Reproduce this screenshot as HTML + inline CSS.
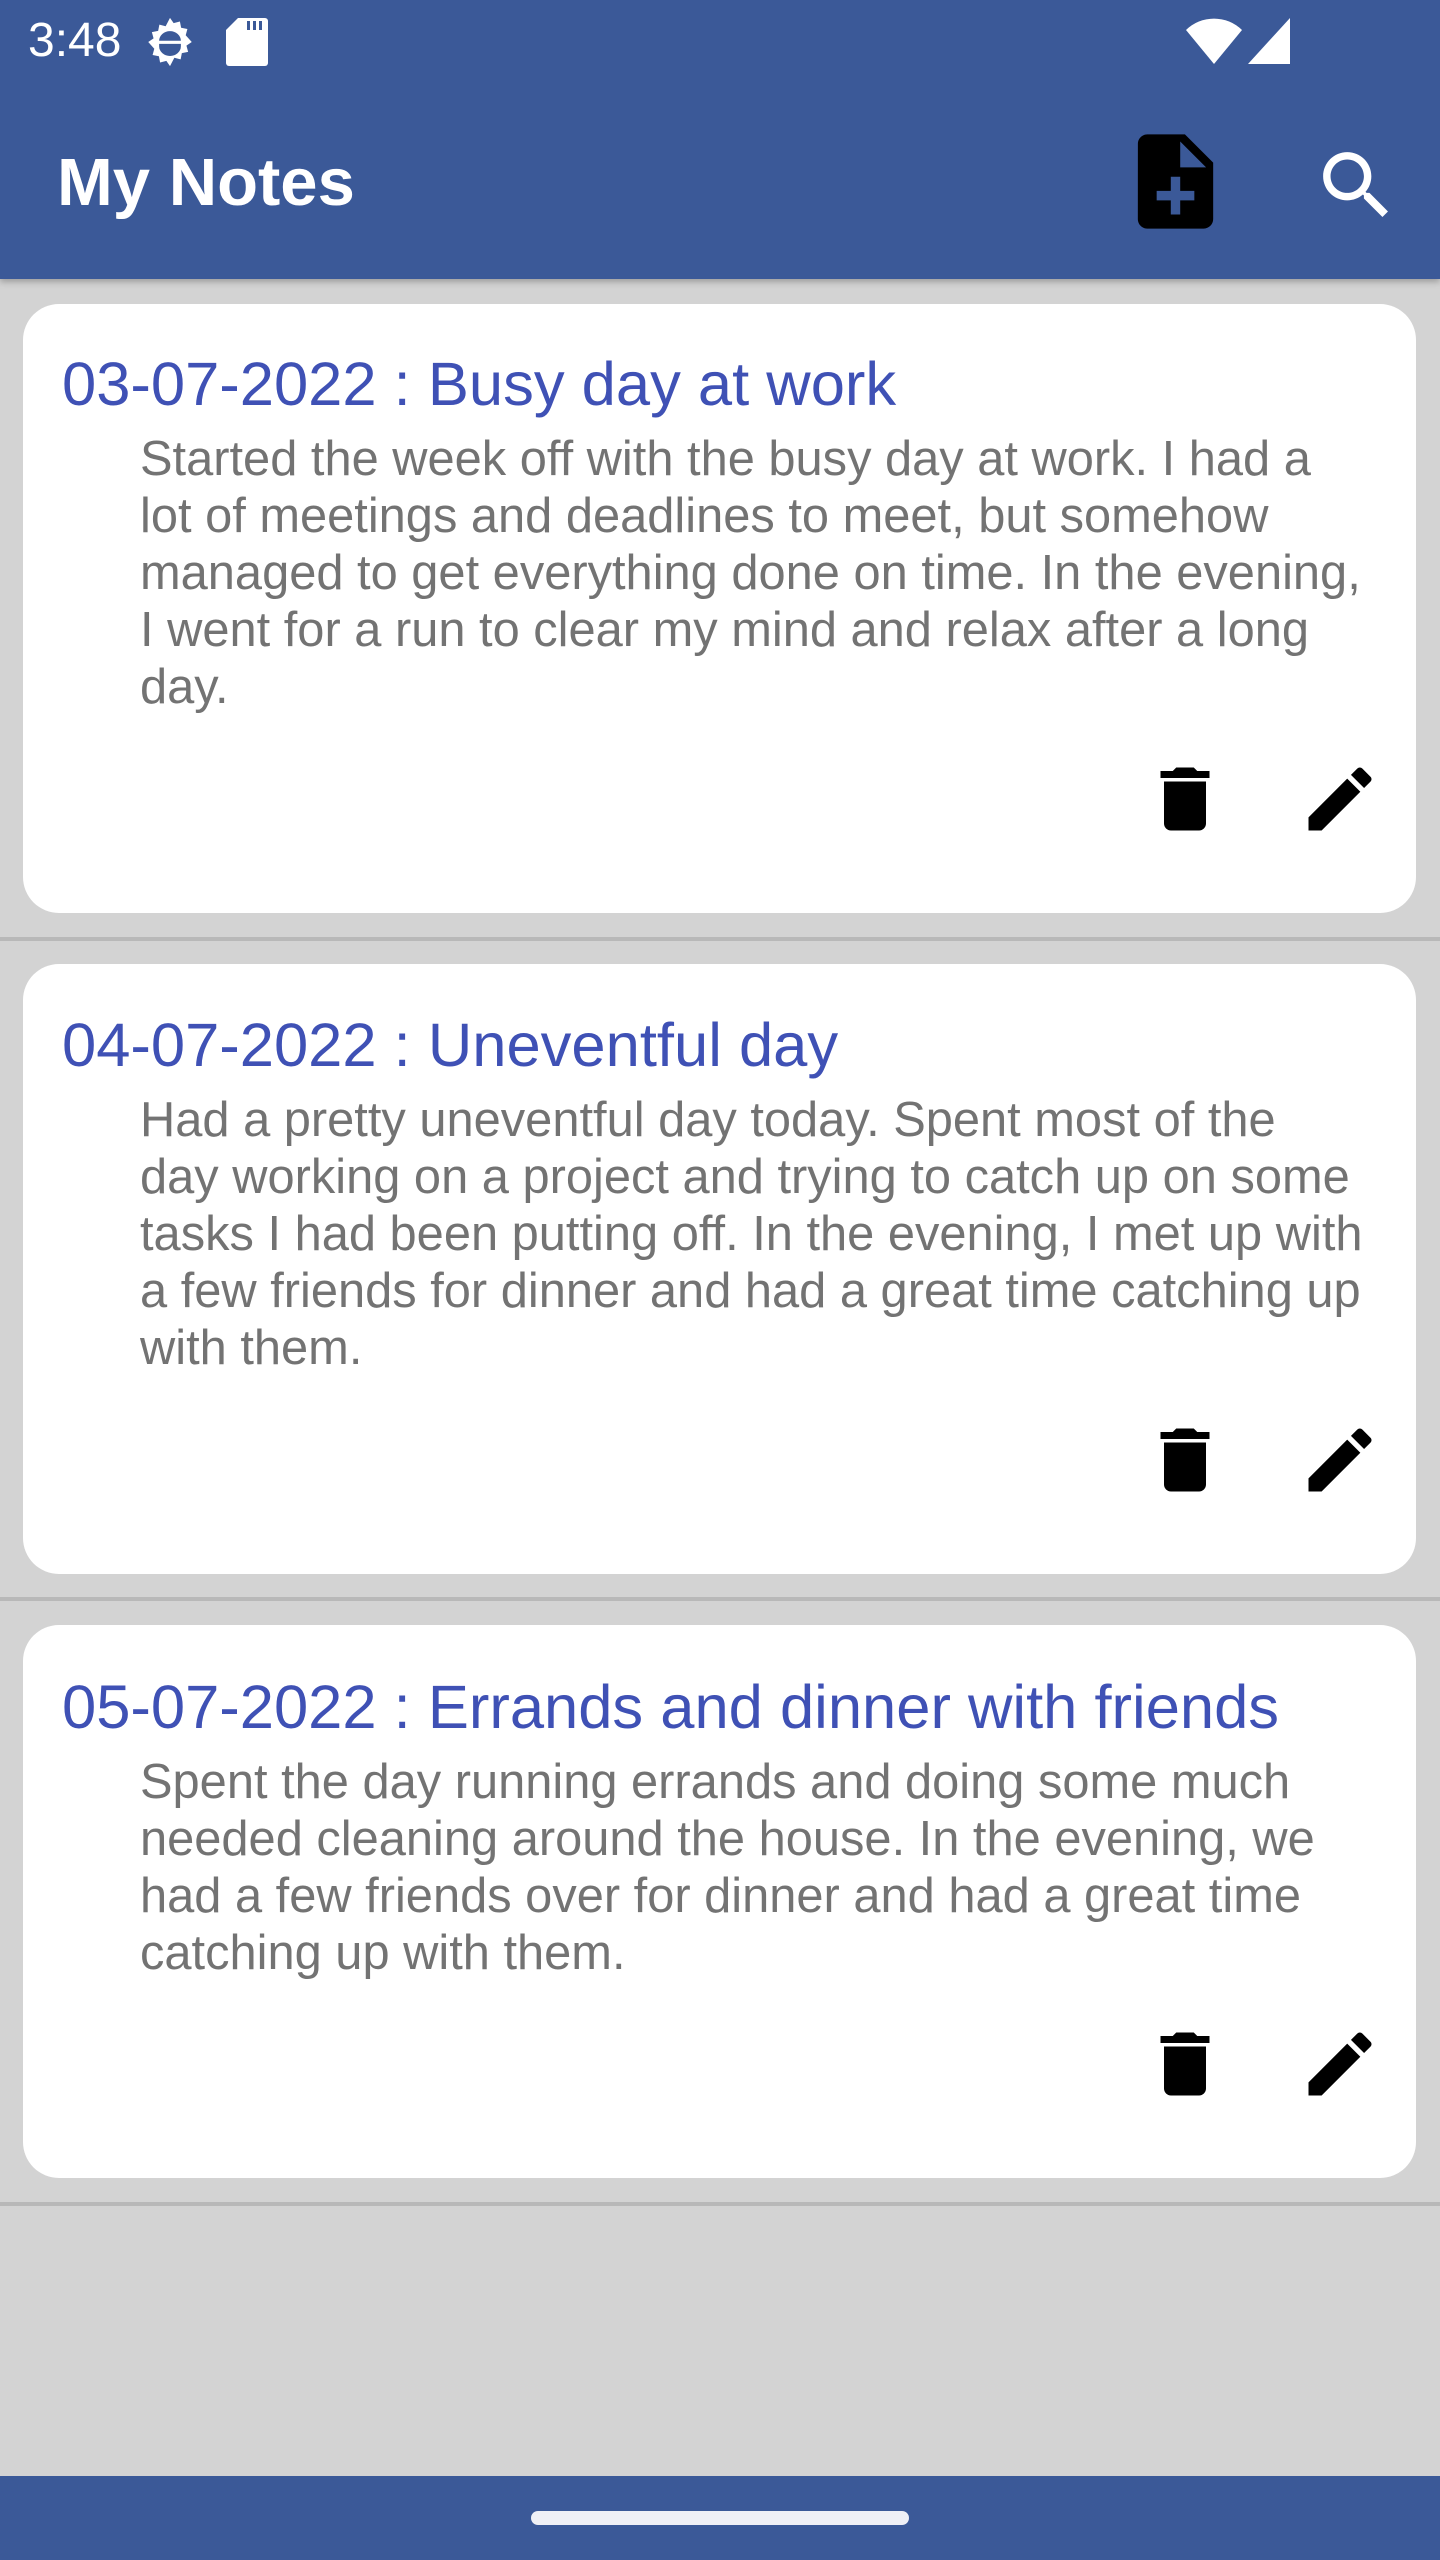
<!DOCTYPE html>
<html><head><meta charset="utf-8"><style>
*{margin:0;padding:0;box-sizing:border-box}
body{width:1440px;height:2560px;background:#d3d3d3;position:relative;overflow:hidden;font-family:"Liberation Sans",sans-serif}
.top{position:absolute;left:0;top:0;width:1440px;height:279px;background:#3b5998;box-shadow:0 3px 6px rgba(0,0,0,.25)}
.abs{position:absolute}
.card{position:absolute;left:23px;width:1393px;background:#fff;border-radius:36px}
.div{position:absolute;left:0;width:1440px;height:4px;background:#b8b8b8}
.title{position:absolute;left:62px;font-size:61.5px;color:#3f51b5;white-space:nowrap;line-height:70px}
.body{position:absolute;left:140px;font-size:48.8px;color:#737373;white-space:nowrap;line-height:57px}
svg.i{position:absolute;width:84px;height:84px}
</style></head><body>
<div class="top"></div>
<div class="abs" style="left:28px;top:15px;font-size:48px;color:#fff;line-height:52px">3:48</div>
<svg class="abs" style="left:141px;top:13px" width="58" height="58" viewBox="0 0 24 24"><path fill="#fff" d="M12 2l1.5 2.2 2.6-.7.5 2.6 2.6.5-.7 2.6L21 12l-2.2 1.5.7 2.6-2.6.5-.5 2.6-2.6-.7L12 22l-1.5-2.2-2.6.7-.5-2.6-2.6-.5.7-2.6L3 12l2.2-1.5-.7-2.6 2.6-.5.5-2.6 2.6.7z"/><path fill="#3b5998" d="M7.5 11.5a4.5 4 0 0 1 9 0zM7.5 12.8h9v1a4.5 4 0 0 1-9 0z"/></svg>
<svg class="abs" style="left:226px;top:18px" width="42" height="48" viewBox="0 0 14 16"><path fill="#fff" d="M4 0h9a1 1 0 0 1 1 1v14a1 1 0 0 1-1 1H1a1 1 0 0 1-1-1V4z"/><path fill="#3b5998" d="M7 1h1v3H7zM9 1h1v3H9zM11 1h1v3h-1z"/></svg>
<svg class="abs" style="left:1186px;top:18px" width="56" height="46" viewBox="0 0 28 23"><path fill="#fff" d="M14 23L0 6a20 20 0 0 1 28 0z"/></svg>
<svg class="abs" style="left:1248px;top:18px" width="42" height="46" viewBox="0 0 42 46"><path fill="#fff" d="M42 0v46H0z"/></svg>
<div class="abs" style="left:57px;top:147px;font-size:67px;font-weight:bold;color:#fff;line-height:72px">My Notes</div>
<svg class="abs" style="left:1119px;top:125px" width="113" height="113" viewBox="0 0 24 24"><path fill="#000" d="M14 2H6c-1.1 0-1.99.9-1.99 2L4 20c0 1.1.89 2 1.99 2H18c1.1 0 2-.9 2-2V8l-6-6z"/><path fill="#3b5998" d="M16 16h-3v3h-2v-3H8v-2h3v-3h2v3h3v2zM13 9V3.5L18.5 9H13z"/></svg>
<svg class="abs" style="left:1312px;top:141px" width="89" height="89" viewBox="0 0 24 24"><path fill="#fff" d="M15.5 14h-.79l-.28-.27C15.41 12.59 16 11.11 16 9.5 16 5.91 13.09 3 9.5 3S3 5.91 3 9.5 5.91 16 9.5 16c1.61 0 3.09-.59 4.23-1.57l.27.28v.79l5 4.99L20.49 19l-4.99-5zm-6 0C7.01 14 5 11.99 5 9.5S7.01 5 9.5 5 14 7.01 14 9.5 11.99 14 9.5 14z"/></svg>

<div class="card" style="top:304px;height:609px"></div>
<div class="div" style="top:937px"></div>
<div class="card" style="top:964px;height:610px"></div>
<div class="div" style="top:1597px"></div>
<div class="card" style="top:1625px;height:553px"></div>
<div class="div" style="top:2202px"></div>

<div class="title" style="top:350px">03-07-2022 : Busy day at work</div>
<div class="body" style="top:431px">Started the week off with the busy day at work. I had a<br>lot of meetings and deadlines to meet, but somehow<br>managed to get everything done on time. In the evening,<br>I went for a run to clear my mind and relax after a long<br>day.</div>

<div class="title" style="top:1011px">04-07-2022 : Uneventful day</div>
<div class="body" style="top:1092px">Had a pretty uneventful day today. Spent most of the<br>day working on a project and trying to catch up on some<br>tasks I had been putting off. In the evening, I met up with<br>a few friends for dinner and had a great time catching up<br>with them.</div>

<div class="title" style="top:1673px">05-07-2022 : Errands and dinner with friends</div>
<div class="body" style="top:1754px">Spent the day running errands and doing some much<br>needed cleaning around the house. In the evening, we<br>had a few friends over for dinner and had a great time<br>catching up with them.</div>

<svg class="i" style="left:1143px;top:757px" viewBox="0 0 24 24"><path d="M6 19c0 1.1.9 2 2 2h8c1.1 0 2-.9 2-2V7H6v12zM19 4h-3.5l-1-1h-5l-1 1H5v2h14V4z"/></svg>
<svg class="i" style="left:1298px;top:757px" viewBox="0 0 24 24"><path d="M3 17.25V21h3.75L17.81 9.94l-3.75-3.75L3 17.25zM20.71 7.04c.39-.39.39-1.02 0-1.41l-2.34-2.34c-.39-.39-1.02-.39-1.41 0l-1.83 1.83 3.75 3.75 1.83-1.83z"/></svg>
<svg class="i" style="left:1143px;top:1418px" viewBox="0 0 24 24"><path d="M6 19c0 1.1.9 2 2 2h8c1.1 0 2-.9 2-2V7H6v12zM19 4h-3.5l-1-1h-5l-1 1H5v2h14V4z"/></svg>
<svg class="i" style="left:1298px;top:1418px" viewBox="0 0 24 24"><path d="M3 17.25V21h3.75L17.81 9.94l-3.75-3.75L3 17.25zM20.71 7.04c.39-.39.39-1.02 0-1.41l-2.34-2.34c-.39-.39-1.02-.39-1.41 0l-1.83 1.83 3.75 3.75 1.83-1.83z"/></svg>
<svg class="i" style="left:1143px;top:2022px" viewBox="0 0 24 24"><path d="M6 19c0 1.1.9 2 2 2h8c1.1 0 2-.9 2-2V7H6v12zM19 4h-3.5l-1-1h-5l-1 1H5v2h14V4z"/></svg>
<svg class="i" style="left:1298px;top:2022px" viewBox="0 0 24 24"><path d="M3 17.25V21h3.75L17.81 9.94l-3.75-3.75L3 17.25zM20.71 7.04c.39-.39.39-1.02 0-1.41l-2.34-2.34c-.39-.39-1.02-.39-1.41 0l-1.83 1.83 3.75 3.75 1.83-1.83z"/></svg>

<div class="abs" style="left:0;top:2476px;width:1440px;height:84px;background:#3b5998"></div>
<div class="abs" style="left:531px;top:2511px;width:378px;height:14px;border-radius:7px;background:#eff0f6"></div>
</body></html>
